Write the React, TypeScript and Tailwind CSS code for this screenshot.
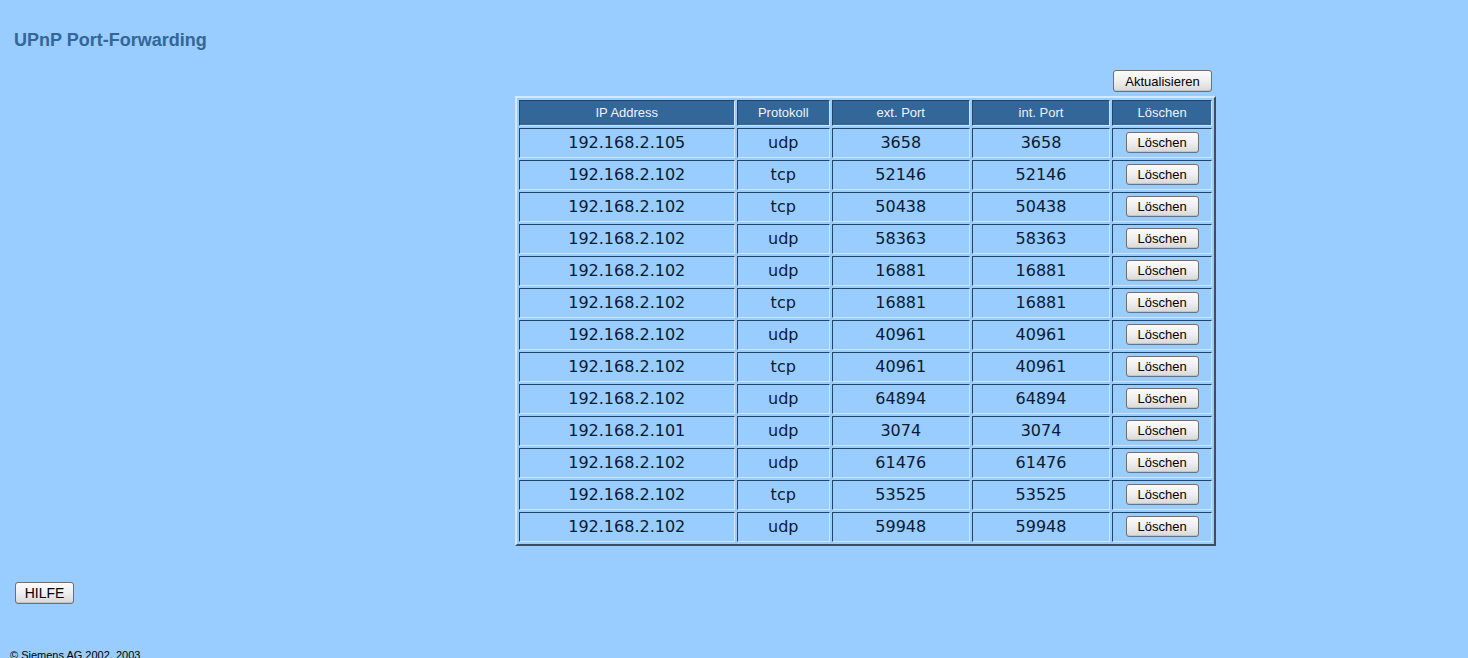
const rows = [
  ["192.168.2.105", "udp", "3658", "3658"],
  ["192.168.2.102", "tcp", "52146", "52146"],
  ["192.168.2.102", "tcp", "50438", "50438"],
  ["192.168.2.102", "udp", "58363", "58363"],
  ["192.168.2.102", "udp", "16881", "16881"],
  ["192.168.2.102", "tcp", "16881", "16881"],
  ["192.168.2.102", "udp", "40961", "40961"],
  ["192.168.2.102", "tcp", "40961", "40961"],
  ["192.168.2.102", "udp", "64894", "64894"],
  ["192.168.2.101", "udp", "3074", "3074"],
  ["192.168.2.102", "udp", "61476", "61476"],
  ["192.168.2.102", "tcp", "53525", "53525"],
  ["192.168.2.102", "udp", "59948", "59948"],
]

const headers = ["IP Address", "Protokoll", "ext. Port", "int. Port", "Löschen"]
const widths = ["w-[217px]", "w-[94px]", "w-[139px]", "w-[140px]", "w-[100px]"]

function XpButton({ children, className = "" }: { children: React.ReactNode; className?: string }) {
  return (
    <button
      className={`rounded-[3px] border border-[#707070] bg-gradient-to-b from-[#fbfbfb] via-[#efefef] to-[#d8d8d8] font-['Liberation_Sans',Arial,sans-serif] text-[13px] leading-none text-black shadow-[inset_0_-1px_0_#c4c4c4] ${className}`}
    >
      {children}
    </button>
  )
}

const cellBorder =
  "border border-t-[#24456a] border-l-[#24456a] border-b-[#cfe4fa] border-r-[#cfe4fa]"

export default function App() {
  return (
    <div className="h-[658px] w-[1468px] overflow-hidden bg-[#99ccff] font-['Liberation_Sans',Arial,sans-serif]">
      <h1 className="pl-[14px] pt-[30px] text-[18px] font-bold leading-[20px] text-[#336699]">
        UPnP Port-Forwarding
      </h1>

      <div className="ml-[515px] mt-[20px] w-[701px]">
        <div className="flex justify-end pr-[4px]">
          <XpButton className="h-[22px] w-[99px]">Aktualisieren</XpButton>
        </div>

        <table className="mt-[4px] border-separate border-spacing-[2px] border-2 border-t-[#d4e8fc] border-l-[#d4e8fc] border-b-[#3e4e5e] border-r-[#3e4e5e]">
          <thead>
            <tr>
              {headers.map((h, i) => (
                <th
                  key={h}
                  className={`${widths[i]} h-[26px] bg-[#336699] p-0 text-center text-[13px] font-normal text-[#eef4fa] ${cellBorder}`}
                >
                  {h}
                </th>
              ))}
            </tr>
          </thead>
          <tbody>
            {rows.map((r, idx) => (
              <tr key={idx}>
                {r.map((c, i) => (
                  <td
                    key={i}
                    className={`h-[30px] p-0 text-center font-['DejaVu_Sans',Verdana,sans-serif] text-[16px] text-[#0c1a33] ${cellBorder}`}
                  >
                    {c}
                  </td>
                ))}
                <td className={`h-[30px] p-0 pb-[2px] text-center ${cellBorder}`}>
                  <XpButton className="h-[21px] w-[73px]">Löschen</XpButton>
                </td>
              </tr>
            ))}
          </tbody>
        </table>
      </div>

      <div className="pl-[15px] pt-[35px]">
        <XpButton className="h-[22px] w-[59px] text-[14px]">HILFE</XpButton>
      </div>

      <p className="pl-[10px] pt-[44px] text-[11px] leading-[13px] text-black">
        © Siemens AG 2002, 2003
      </p>
    </div>
  )
}
